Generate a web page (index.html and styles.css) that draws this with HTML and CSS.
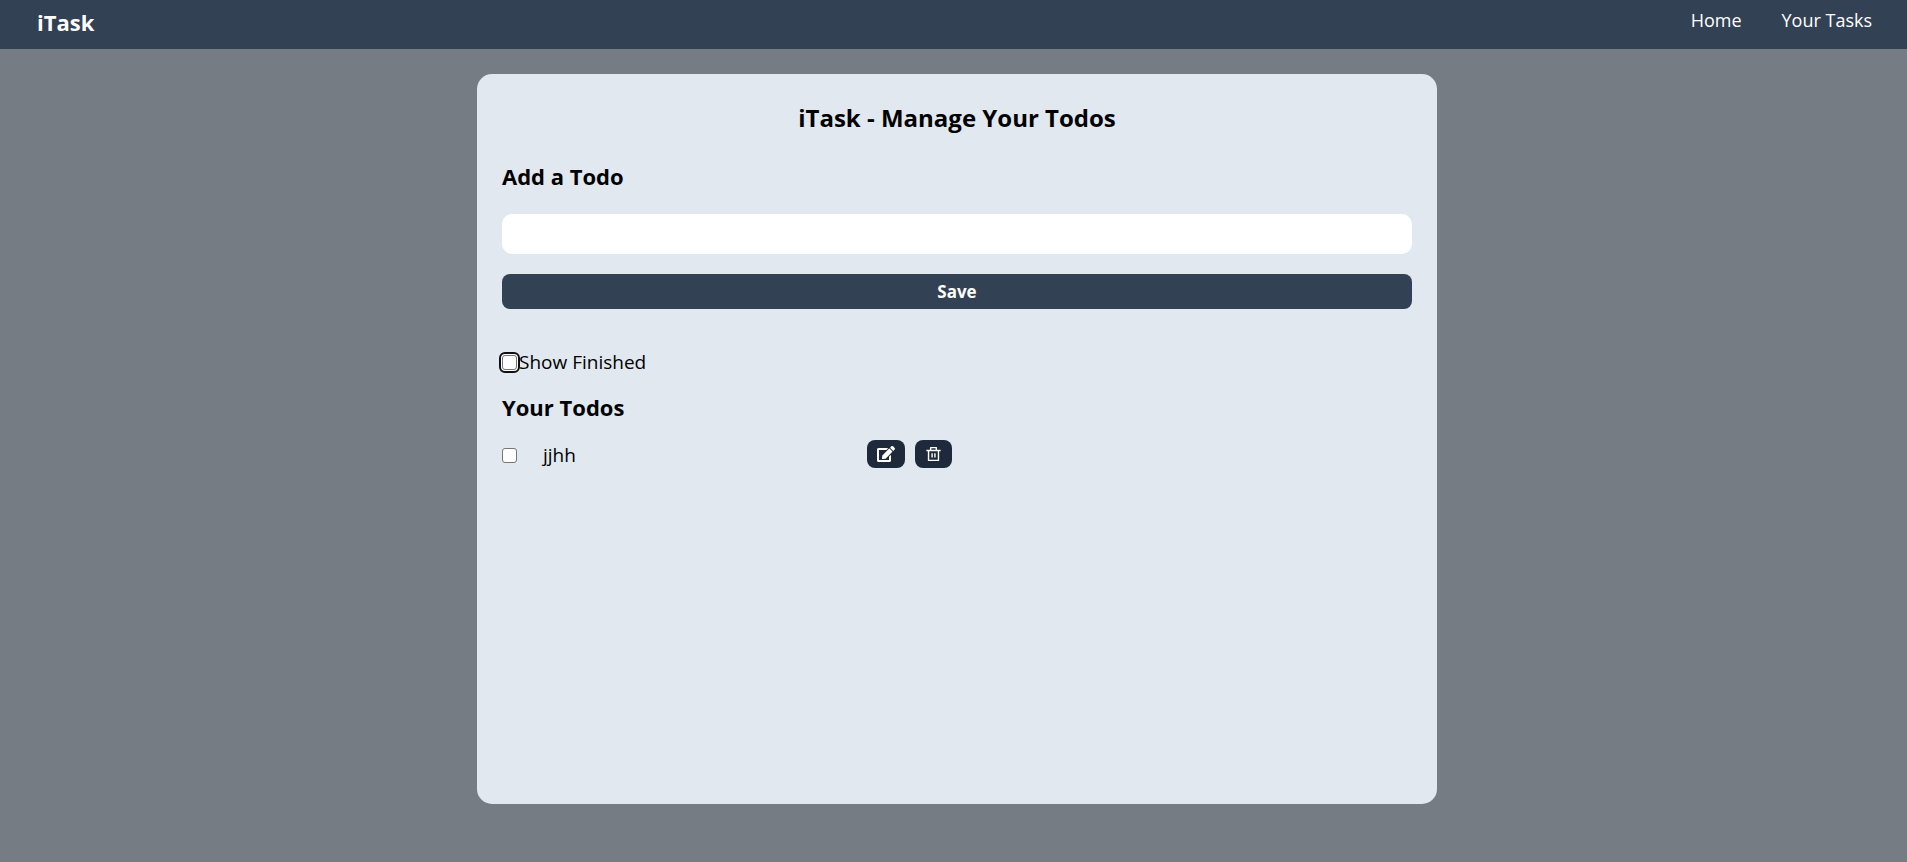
FILE: index.html
```html
<!DOCTYPE html>
<html lang="en">
<head>
<meta charset="utf-8">
<meta name="viewport" content="width=device-width, initial-scale=1">
<title>iTask</title>
<link rel="stylesheet" href="styles.css">
</head>
<body>
<nav class="navbar">
  <span class="brand">iTask</span>
  <ul class="nav-links">
    <li><a href="#">Home</a></li>
    <li><a href="#">Your Tasks</a></li>
  </ul>
</nav>
<main class="page">
  <div class="card">
    <h1 class="title">iTask - Manage Your Todos</h1>
    <form class="add-todo">
      <h2 class="heading"><label for="todo">Add a Todo</label></h2>
      <input class="todo-input" id="todo" type="text">
      <button class="save" type="button">Save</button>
    </form>
    <div class="filter">
      <input class="check check-focused" id="finished" type="checkbox">
      <label for="finished">Show Finished</label>
    </div>
    <h2 class="heading">Your Todos</h2>
    <div class="todo">
      <div class="todo-main">
        <input class="check" id="item" type="checkbox">
        <label for="item">jjhh</label>
      </div>
      <div class="actions">
        <button class="action" type="button" aria-label="Edit">
          <svg width="18" height="18" viewBox="0 0 576 512" fill="currentColor"><path d="M402.6 83.2l90.2 90.2c3.800 3.800 3.800 10 0 13.800L274.400 405.600l-92.800 10.300c-12.400 1.400-22.900-9.100-21.500-21.500l10.300-92.800L388.800 83.200c3.800-3.800 10-3.800 13.800 0zm162-22.900l-48.800-48.800c-15.200-15.200-39.900-15.200-55.200 0l-35.400 35.400c-3.800 3.800-3.800 10 0 13.800l90.200 90.200c3.800 3.800 10 3.800 13.800 0l35.400-35.400c15.200-15.300 15.200-40 0-55.200zM384 346.200V448H64V128h229.800c3.200 0 6.200-1.300 8.500-3.500l40-40c7.600-7.600 2.200-20.500-8.500-20.500H48C21.500 64 0 85.500 0 112v352c0 26.500 21.500 48 48 48h352c26.500 0 48-21.500 48-48V306.200c0-10.700-12.900-16-20.500-8.500l-40 40c-2.200 2.300-3.500 5.300-3.500 8.500z"/></svg>
        </button>
        <button class="action" type="button" aria-label="Delete">
          <svg width="17" height="18" viewBox="0 0 24 24" fill="currentColor"><path d="M17 6H22V8H20V21C20 21.500 19.500 22 19 22H5C4.500 22 4 21.500 4 21V8H2V6H7V3C7 2.500 7.500 2 8 2H16C16.500 2 17 2.500 17 3V6ZM18 8H6V20H18V8ZM9 11H11V17H9V11ZM13 11H15V17H13V11ZM9 4V6H15V4H9Z"/></svg>
        </button>
      </div>
    </div>
  </div>
</main>
</body>
</html>
```
FILE: styles.css
```css
* { box-sizing: border-box; }
body {
  margin: 0;
  background: #757c83;
  color: #000;
  font-family: "Segoe UI", "Open Sans", "Noto Sans", sans-serif;
  font-size: 19px;
  line-height: 30px;
}
h1, h2, ul { margin: 0; padding: 0; }
button, input { font: inherit; margin: 0; }
.navbar {
  display: flex;
  justify-content: space-between;
  padding: 5px 35px 4px 37px;
  min-height: 49px;
  background: #334155;
  color: #fff;
}
.brand { font-size: 22px; line-height: 35px; font-weight: 700; }
.nav-links { display: flex; gap: 40px; list-style: none; font-size: 18px; }
.nav-links a { color: inherit; text-decoration: none; }
.page { padding: 25px 0 25px 7px; }
.card {
  max-width: 960px;
  min-height: calc(100vh - 132px);
  margin: 0 auto;
  padding: 25px;
  border-radius: 15px;
  background: #e1e8ef;
}
.title {
  font-size: 24px;
  line-height: 38px;
  font-weight: 700;
  text-align: center;
}
.heading { font-size: 22px; line-height: 35px; font-weight: 700; }
.add-todo {
  display: flex;
  flex-direction: column;
  gap: 20px;
  padding-top: 22px;
}
.todo-input {
  width: 100%;
  height: 40px;
  padding: 5px 20px;
  border: 0;
  border-radius: 10px;
  background: #fff;
}
.save {
  height: 35px;
  padding: 1px 0 0;
  border: 0;
  border-radius: 8px;
  background: #334155;
  color: #fff;
  font-size: 17px;
  line-height: 34px;
  font-weight: 700;
}
.filter { display: flex; align-items: center; margin: 38px 0 13px; }
.check {
  appearance: none;
  width: 15px;
  height: 15px;
  border: 1px solid #767676;
  border-radius: 3px;
  background: #fff;
}
.check:checked { background: #334155; }
.check-focused {
  margin-right: 2px;
  outline: 2px solid #101010;
  outline-offset: 1px;
  box-shadow: 0 0 0 1px #fff;
}
.todo {
  display: flex;
  justify-content: space-between;
  width: 50%;
  margin-top: 15px;
  padding-right: 5px;
}
.todo-main { display: flex; align-items: center; gap: 26px; }
.actions { display: flex; align-items: flex-start; gap: 10px; }
.action {
  display: flex;
  align-items: center;
  padding: 5px 10px;
  border: 0;
  border-radius: 8px;
  background: #1e293b;
  color: #fff;
}
```
